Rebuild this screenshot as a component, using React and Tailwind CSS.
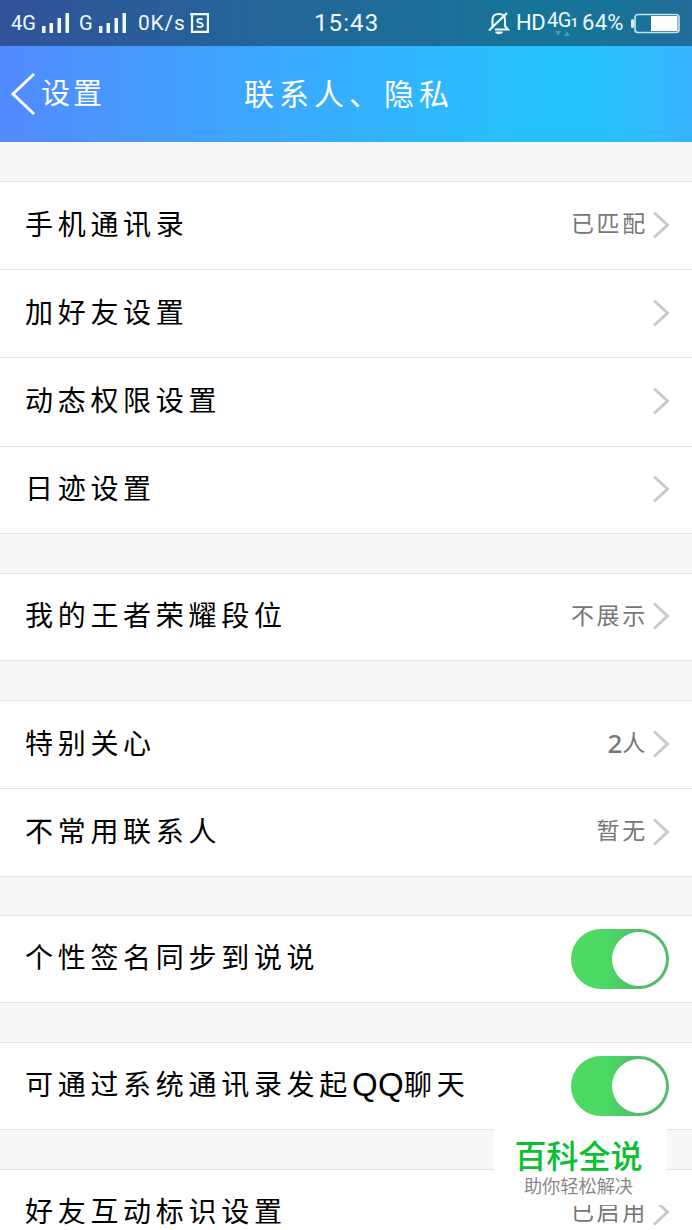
import clsx from "clsx";

const groups = [
  {
    rows: [
      { label: "手机通讯录", value: "已匹配", height: "h-[88px]" },
      { label: "加好友设置", height: "h-[88px]" },
      { label: "动态权限设置", height: "h-[89px]" },
      { label: "日迹设置", height: "h-[87px]" },
    ],
    gap: "mt-[39px]",
  },
  { rows: [{ label: "我的王者荣耀段位", value: "不展示", height: "h-[87px]" }], gap: "mt-[39px]" },
  {
    rows: [
      { label: "特别关心", count: "2", value: "人", height: "h-[88px]" },
      { label: "不常用联系人", value: "暂无", height: "h-[88px]" },
    ],
    gap: "mt-[39px]",
  },
  { rows: [{ label: "个性签名同步到说说", toggle: true, height: "h-[87px]" }], gap: "mt-[38px]" },
  {
    rows: [{ label: "可通过系统通讯录发起", latin: "QQ", tail: "聊天", toggle: true, height: "h-[87px]" }],
    gap: "mt-[39px]",
  },
  { rows: [{ label: "好友互动标识设置", value: "已启用", height: "h-[87px]" }], gap: "mt-[39px]" },
];

const Signal = () => (
  <svg width="28" height="20" viewBox="0 0 28 20" fill="currentColor">
    <rect x="0" y="13" width="3.5" height="7" />
    <rect x="7.5" y="10" width="3.5" height="10" />
    <rect x="15.5" y="5" width="3.5" height="15" />
    <rect x="23.5" y="0" width="3.5" height="20" />
  </svg>
);

const StatusBar = () => (
  <div className="flex h-[46px] items-center bg-black/40 font-['Roboto','Noto_Sans_CJK_SC',sans-serif] text-[20px] leading-none text-[#f0faff]">
    <div className="flex w-[314px] items-center pl-[11px]">
      <span className="w-[31px]">4G</span>
      <Signal />
      <span className="ml-[9px] w-[20px]">G</span>
      <Signal />
      <span className="ml-[11px] w-[52px] whitespace-nowrap text-[21px] tracking-[0.8px]">0K/s</span>
      <svg width="19" height="20" viewBox="0 0 19 20" fill="none" stroke="currentColor" strokeWidth="2.2">
        <path d="M0 1.1H17.9V18.9H2V1.1" />
        <path d="M12.6 6.6C11 5.6 7.2 5.6 7.2 7.9C7.2 10.4 12.8 9.4 12.8 12C12.8 14.4 8.6 14.3 6.9 13.2" strokeWidth="1.8" />
      </svg>
    </div>
    <span className="w-[174px] text-[24px] tracking-[1.1px]">15:43</span>
    <svg width="22" height="23" viewBox="0 0 22 23" fill="none" stroke="currentColor" strokeWidth="2.1">
      <path d="M4.5 16V8C4.5 3.5 7 2 11 2S17 4 17 8V14L20 17.5H7M1 18.5L19 1" />
      <path d="M7.5 20H14.5C13.5 22.3 8.5 22.3 7.5 20Z" fill="currentColor" strokeWidth="1" />
    </svg>
    <span className="ml-[6px] w-[31px] text-[22px] tracking-[-0.5px]">HD</span>
    <div className="flex w-[35px] flex-col pt-[1px]">
      <div className="flex items-end whitespace-nowrap">
        <span className="text-[20px] leading-[20px] tracking-[-0.6px]">4G</span>
        <span className="text-[13px] leading-[14px] font-medium">1</span>
      </div>
      <svg className="ml-[8px]" width="16" height="7" viewBox="0 0 16 7" fill="#4f9ab5">
        <path d="M0 1H6L3 6ZM9 6H15L12 1Z" />
      </svg>
    </div>
    <span className="w-[49px] text-[22px] tracking-[0.3px]">64%</span>
    <svg width="50" height="21" viewBox="0 0 50 21">
      <rect x="0" y="6" width="3" height="9" rx="1.5" fill="#d8edf4" />
      <rect x="4" y="1.5" width="44" height="18" rx="3" fill="none" stroke="#c3e2ec" strokeWidth="1.7" />
      <rect x="20" y="3" width="26.5" height="15" fill="white" />
    </svg>
  </div>
);

const Header = () => (
  <header className="h-[142px] bg-[linear-gradient(90deg,#528aff_0%,#3ea5ff_34%,#26c2fe_78%,#27c2fe_86%,#38b4ff_100%)]">
    <StatusBar />
    <div className="flex h-[96px] items-center text-white">
      <svg className="ml-[10px]" width="26" height="44" viewBox="0 0 26 44" fill="none" stroke="currentColor" strokeWidth="3">
        <path d="M24 2L3 22L24 42" />
      </svg>
      <span className="ml-[5px] w-[203px] pb-[5px] text-[29px] tracking-[3px]">设置</span>
      <span className="pb-[5px] text-[30px] tracking-[5px]">联系人、隐私</span>
    </div>
  </header>
);

const Toggle = () => (
  <div className="mr-[23px] flex h-[60px] w-[98px] items-center justify-end rounded-full bg-[linear-gradient(90deg,#4cd964_36%,#50bd6b_66%)] pr-[3px]">
    <div className="h-[54px] w-[54px] rounded-full bg-white" />
  </div>
);

const Chevron = () => (
  <svg className="mr-[22px] mb-[2px]" width="18" height="28" viewBox="0 0 18 28" fill="none" stroke="#c9c9cb" strokeWidth="3">
    <path d="M2 1.5L15.5 14L2 26.5" />
  </svg>
);

const Row = ({ label, latin, tail, count, value, toggle, height }) => (
  <div className={clsx("flex items-center justify-between border-t border-[#e3e3e6] bg-white", height)}>
    <span className="flex items-center pb-[6px] pl-[25px] text-[28px] tracking-[4.7px] whitespace-nowrap text-black">
      {label}
      {latin && <span className="pt-[2px] font-['Liberation_Sans',sans-serif] text-[33px] tracking-[0.3px]">{latin}</span>}
      {tail}
    </span>
    {toggle ? (
      <Toggle />
    ) : (
      <div className="flex items-center">
        {count && <span className="pb-[4px] font-['Noto_Sans',sans-serif] text-[26px] font-medium text-[#777]">{count}</span>}
        {value && <span className="mr-[4px] pb-[6px] text-[23px] tracking-[2.7px] text-[#777]">{value}</span>}
        <Chevron />
      </div>
    )}
  </div>
);

export default function App() {
  return (
    <div className="relative h-[1230px] w-[692px] overflow-hidden bg-[#f8f8fb] font-['Noto_Sans_CJK_SC',sans-serif] leading-none">
      <Header />
      {groups.map(({ rows, gap }) => (
        <section key={rows[0].label} className={clsx("border-b border-[#e3e3e6]", gap)}>
          {rows.map((row) => (
            <Row key={row.label} {...row} />
          ))}
        </section>
      ))}

      {/* watermark */}
      <div className="absolute top-[1129px] left-[494px] flex h-[76px] w-[173px] flex-col items-center bg-white pt-[9px] pr-[4px]">
        <span className="text-[32px] font-medium text-[#09c130]">百科全说</span>
        <span className="mt-[6px] text-[18.2px] text-[#888]">助你轻松解决</span>
      </div>
    </div>
  );
}
